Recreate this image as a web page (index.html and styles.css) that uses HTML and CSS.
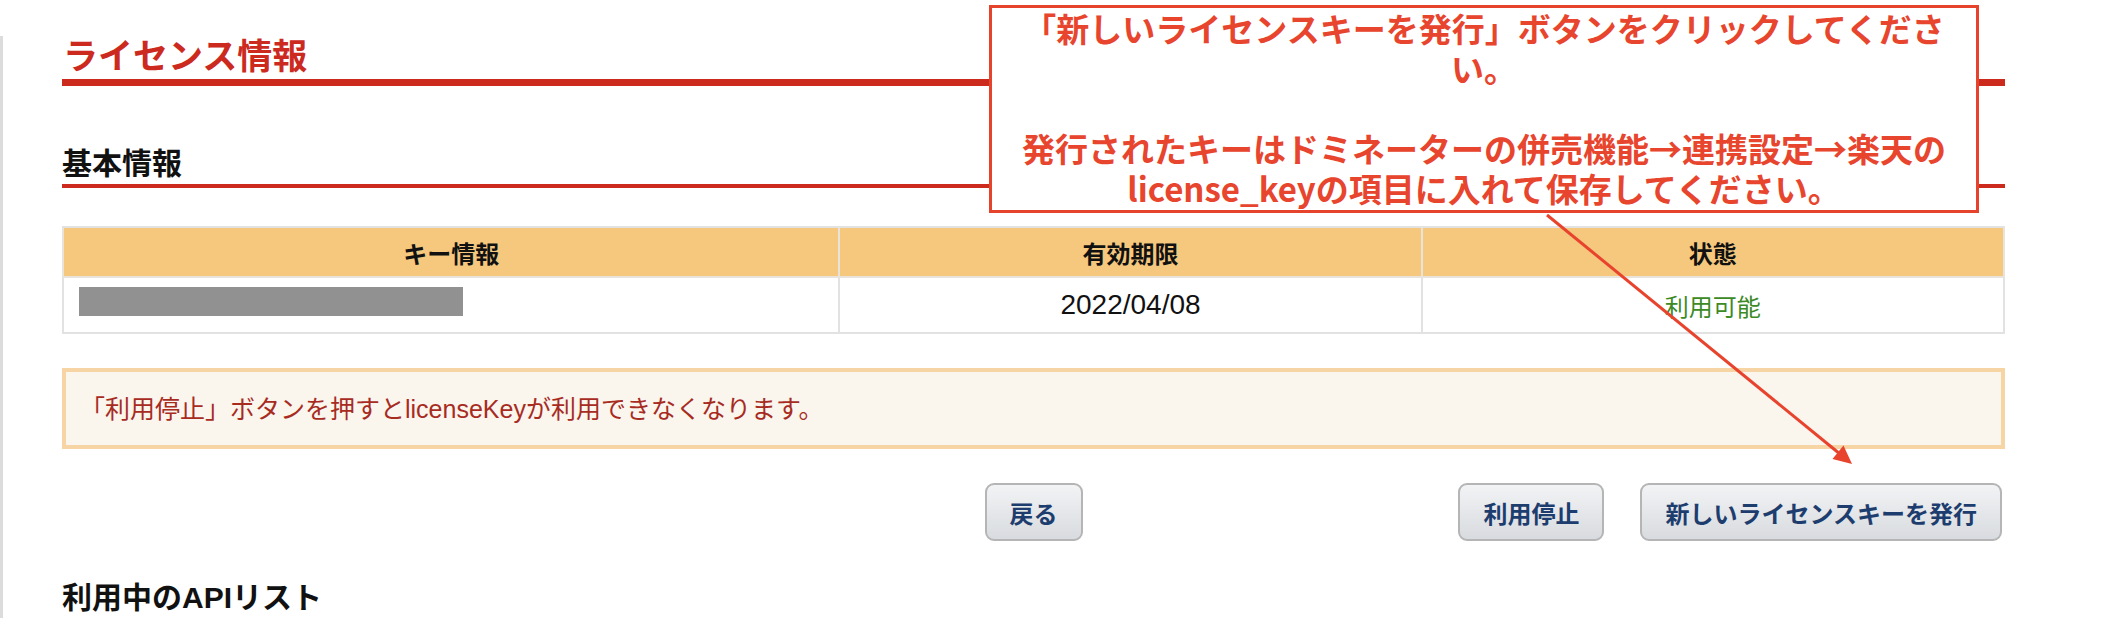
FILE: index.html
```html
<!DOCTYPE html>
<html lang="ja">

<head>
    <meta charset="UTF-8">
    <meta name="viewport" content="width=device-width, initial-scale=1.0">
    <title>ライセンス情報</title>
    <link rel="stylesheet" href="styles.css">
</head>

<body>
    <div class="page">
        <div class="main">
            <h1 class="page-title">ライセンス情報</h1>

            <h2 class="section-title">基本情報</h2>
            <table class="info-table">
                <thead>
                    <tr>
                        <th class="col-key">キー情報</th>
                        <th class="col-date">有効期限</th>
                        <th class="col-state">状態</th>
                    </tr>
                </thead>
                <tbody>
                    <tr>
                        <td class="key-cell"><span class="masked"></span></td>
                        <td class="date-cell">2022/04/08</td>
                        <td class="state-ok">利用可能</td>
                    </tr>
                </tbody>
            </table>

            <div class="notice">「利用停止」ボタンを押すとlicenseKeyが利用できなくなります。</div>

            <div class="actions">
                <div></div>
                <button class="btn">戻る</button>
                <div class="actions-right">
                    <button class="btn">利用停止</button>
                    <button class="btn">新しいライセンスキーを発行</button>
                </div>
            </div>

            <h2 class="section-title plain">利用中のAPIリスト</h2>
        </div>

        <!-- annotation on top of the page -->
        <div class="callout">
            「新しいライセンスキーを発行」ボタンをクリックしてくださ<br>い。<br><br>
            発行されたキーはドミネーターの併売機能→連携設定→楽天の<br>license_keyの項目に入れて保存してください。
        </div>
        <svg class="arrow" width="2104" height="618" viewBox="0 0 2104 618">
            <line x1="1547" y1="215" x2="1840" y2="454" stroke="#e8432d" stroke-width="3" />
            <polygon points="1852,464 1832.5,459 1843.5,445.5" fill="#e8432d" />
        </svg>
    </div>
</body>

</html>
```

FILE: styles.css
```css
body {
    margin: 0;
    font-family: "Liberation Sans", "Noto Sans CJK JP", sans-serif;
    color: #111;
    background: #fff;
    overflow: hidden;
}

.page {
    position: relative;
    width: 2104px;
    height: 618px;
    overflow: hidden;
}

.main {
    margin-top: 36px;
    width: 1943px;
    height: 582px;
    padding-left: 59px;
    border-left: 3px solid #dcdcdc;
}

.page-title {
    margin: 8px 0 0;
    padding: 0 0 1px 1px;
    font-size: 35px;
    line-height: 42px;
    font-weight: bold;
    color: #cc2a1e;
    border-bottom: 7px solid #cd2a1e;
}

.section-title {
    margin: 60px 0 0;
    padding-bottom: 2px;
    font-size: 30px;
    line-height: 36px;
    font-weight: bold;
    color: #111;
    border-bottom: 4px solid #cd2a1e;
}

.section-title.plain {
    margin-top: 39px;
    border-bottom: none;
}

.info-table {
    width: 100%;
    margin-top: 38px;
    border-collapse: collapse;
    border: 2px solid #e2e2e2;
    font-size: 24px;
}

.info-table th {
    height: 48px;
    padding: 0;
    background: #f5c87e;
    border: 2px solid #e8e4dc;
    border-top-color: #e2e2e2;
    font-weight: bold;
    text-align: center;
}

.info-table .col-key {
    width: 40%;
}

.info-table .col-date,
.info-table .col-state {
    width: 30%;
}

.info-table td {
    height: 54px;
    padding: 0;
    border: 2px solid #e2e2e2;
    text-align: center;
    vertical-align: middle;
}

.info-table .key-cell {
    text-align: left;
    vertical-align: top;
}

.info-table .date-cell {
    font-size: 28px;
}

.masked {
    display: block;
    width: 384px;
    height: 29px;
    margin: 9px 0 0 15px;
    background: #919191;
}

.state-ok {
    color: #3b8a25;
}

.notice {
    margin-top: 34px;
    height: 73px;
    padding: 0 14px;
    line-height: 75px;
    font-size: 25px;
    color: #a72b1f;
    background: #faf6ee;
    border: 4px solid #f6d4a4;
}

.actions {
    display: grid;
    grid-template-columns: 1fr auto 1fr;
    align-items: center;
    margin-top: 34px;
}

.actions-right {
    display: flex;
    justify-content: flex-end;
    gap: 36px;
    margin-right: 3px;
}

.btn {
    height: 58px;
    padding: 0 23px;
    border: 2px solid #b5b5b5;
    border-radius: 9px;
    background: linear-gradient(#f2f3f5, #d8dbdf);
    font-family: "Liberation Sans", "Noto Sans CJK JP", sans-serif;
    font-size: 24px;
    font-weight: bold;
    color: #1d3d6e;
    cursor: pointer;
}

.callout {
    position: absolute;
    left: 989px;
    top: 5px;
    width: 984px;
    height: 202px;
    border: 3px solid #e5432b;
    background: #fff;
    font-family: "Noto Sans CJK JP", sans-serif;
    font-size: 33px;
    line-height: 40px;
    font-weight: bold;
    color: #e8452e;
    text-align: center;
}

.arrow {
    position: absolute;
    left: 0;
    top: 0;
    pointer-events: none;
}
```
